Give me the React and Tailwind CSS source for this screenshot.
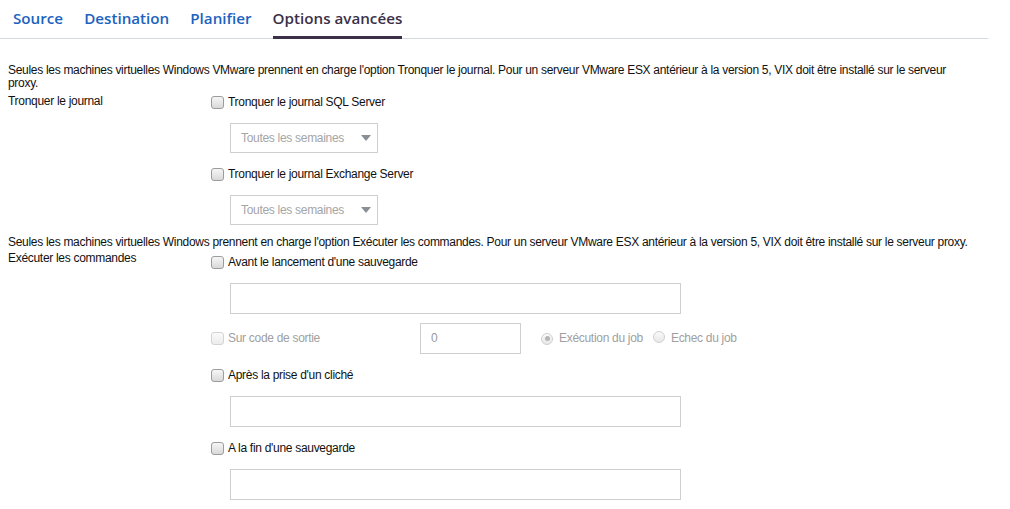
const body = { fontFamily: '"Liberation Sans", "Noto Sans CJK JP", sans-serif' };

function Box({ disabled }) {
  return (
    <span
      className={
        'inline-block w-[13px] h-[13px] rounded-[3px] border shrink-0 ' +
        (disabled
          ? 'border-[#d4d4d4] bg-gradient-to-b from-[#fafafa] to-[#ececec]'
          : 'border-[#9c9c9c] bg-gradient-to-b from-[#f6f6f6] to-[#d9d9d9]')
      }
    />
  );
}

function Radio({ checked }) {
  return (
    <span className="inline-flex items-center justify-center w-[12px] h-[12px] rounded-full border border-[#d0d0d0] bg-gradient-to-b from-[#fafafa] to-[#e8e8e8] shrink-0">
      {checked && <span className="w-[5px] h-[5px] rounded-full bg-[#b5b5b5]" />}
    </span>
  );
}

function Check({ label, disabled }) {
  return (
    <div className="flex items-center h-[20px]">
      <Box disabled={disabled} />
      <span className={'ml-[4px] ' + (disabled ? 'text-[#a0a0a0]' : 'text-[#111]')}>{label}</span>
    </div>
  );
}

function Select() {
  return (
    <div className="ml-[19px] w-[148px] h-[30px] border border-[#cfcfcf] flex items-center justify-between pl-[10px] pr-[6px] text-[#a5a5a5]">
      <span>Toutes les semaines</span>
      <svg width="10" height="6" viewBox="0 0 10 6">
        <path d="M0 0h10L5 6z" fill="#8a8f96" />
      </svg>
    </div>
  );
}

function Field() {
  return <div className="ml-[19px] w-[451px] h-[31px] border border-[#cfcfcf]" />;
}

export default function App() {
  const tabs = ['Source', 'Destination', 'Planifier', 'Options avancées'];
  return (
    <div className="w-[1010px] h-[509px] bg-white overflow-hidden text-[12px] leading-[13px] tracking-[-0.3px]" style={body}>
      <div className="w-[988px] h-[39px] border-b border-[#d3dae0] flex pl-[13px] gap-[21px] tracking-normal" style={{ fontFamily: '"Open Sans", sans-serif' }}>
        {tabs.map((t, i) => (
          <div
            key={t}
            className={
              'h-[39px] flex items-start pt-[12px] text-[15.2px] font-semibold ' +
              (i === 3 ? 'text-[#3b3048] border-b-[3px] border-[#3b3048]' : 'text-[#1c62c0]')
            }
          >
            {t}
          </div>
        ))}
      </div>

      <div className="pl-[8px] pt-[25px] text-[#111]">
        <p className="w-[945px]">
          Seules les machines virtuelles Windows VMware prennent en charge l'option Tronquer le journal. Pour un serveur VMware ESX antérieur à la version 5, VIX doit être installé sur le serveur proxy.
        </p>
        <div className="flex mt-[2px]">
          <div className="w-[203px] pt-[3px]">Tronquer le journal</div>
          <div className="flex flex-col">
            <Check label="Tronquer le journal SQL Server" />
            <div className="mt-[11px]"><Select /></div>
            <div className="mt-[11px]"><Check label="Tronquer le journal Exchange Server" /></div>
            <div className="mt-[11px]"><Select /></div>
          </div>
        </div>

        <p className="mt-[11px] whitespace-nowrap">
          Seules les machines virtuelles Windows prennent en charge l'option Exécuter les commandes. Pour un serveur VMware ESX antérieur à la version 5, VIX doit être installé sur le serveur proxy.
        </p>
        <div className="flex mt-[3px]">
          <div className="w-[203px]">Exécuter les commandes</div>
          <div className="flex flex-col">
            <Check label="Avant le lancement d'une sauvegarde" />
            <div className="mt-[11px]"><Field /></div>
            <div className="flex items-center mt-[9px] h-[31px]">
              <div className="w-[209px]"><Check label="Sur code de sortie" disabled /></div>
              <div className="w-[101px] h-[31px] border border-[#cfcfcf] flex items-center pl-[10px] text-[#999]">0</div>
              <div className="flex items-center ml-[20px] text-[#a0a0a0]">
                <Radio checked />
                <span className="ml-[6px]">Exécution du job</span>
                <span className="ml-[10px]"><Radio /></span>
                <span className="ml-[6px]">Echec du job</span>
              </div>
            </div>
            <div className="mt-[11px]"><Check label="Après la prise d'un cliché" /></div>
            <div className="mt-[11px]"><Field /></div>
            <div className="mt-[11px]"><Check label="A la fin d'une sauvegarde" /></div>
            <div className="mt-[11px]"><Field /></div>
          </div>
        </div>
      </div>
    </div>
  );
}
